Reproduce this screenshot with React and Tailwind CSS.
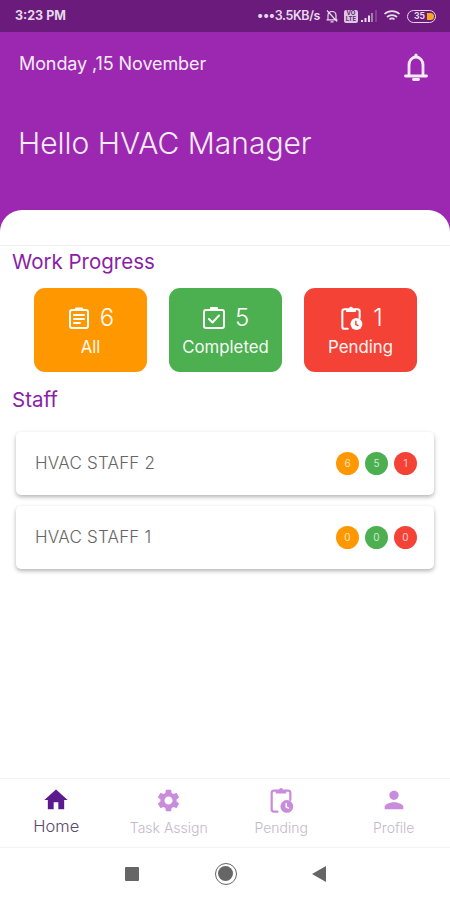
import { MdHome, MdSettings, MdPerson } from 'react-icons/md'

function ClipboardList({ size = 24 }) {
  return (
    <svg width={size} height={size} viewBox="0 0 24 24" fill="none" stroke="currentColor" strokeWidth="2" strokeLinejoin="round" strokeLinecap="round">
      <rect x="3" y="4" width="18" height="18" rx="2" />
      <path d="M9 4V2.5h6V4" />
      <path d="M7 9h10M7 13h10M7 17h6" />
    </svg>
  )
}

function ClipboardCheck({ size = 24 }) {
  return (
    <svg width={size} height={size} viewBox="0 0 24 24" fill="none" stroke="currentColor" strokeWidth="2" strokeLinejoin="round" strokeLinecap="round">
      <rect x="2" y="4" width="20" height="18" rx="2" />
      <path d="M9 4V2h6v2" />
      <path d="M7 13l3.5 3.5 6.5-7" />
    </svg>
  )
}

function ClipboardClock({ size = 24, className = '', mark = '#f44336' }) {
  return (
    <svg width={size} height={size} viewBox="0 0 24 24" fill="none" className={className}>
      <path d="M9 22H6a2 2 0 0 1-2-2V6a2 2 0 0 1 2-2h1.5M16.5 4H18a2 2 0 0 1 2 2v6" stroke="currentColor" strokeWidth="1.9" strokeLinecap="round" />
      <path d="M7.5 6.5V3h2.7a1.9 1.9 0 0 1 3.6 0h2.7v3.5z" fill="currentColor" />
      <circle cx="17" cy="17.5" r="5.5" fill="currentColor" />
      <path d="M16.5 15v3l2 1" stroke={mark} strokeWidth="1.3" strokeLinecap="round" />
    </svg>
  )
}

function HeaderBell() {
  return (
    <svg width="26" height="30" viewBox="0 0 26 30" fill="none" stroke="currentColor" strokeWidth="2.8" strokeLinecap="round">
      <path d="M6 23V13c0-4.5 3-8 7-8s7 3.500 7 8v10" />
      <path d="M2.500 24h21" />
      <circle cx="13" cy="3.200" r="1.600" fill="currentColor" stroke="none" />
      <path d="M10.500 27.500h5" />
    </svg>
  )
}

function StatCard({ color, icon, count, label }) {
  return (
    <div className={`w-[113px] h-[84px] rounded-[11px] ${color} flex flex-col items-center justify-center text-white pt-[2px]`}>
      <div className="flex items-center gap-[9px] h-[30px]">
        {icon}
        <span className="text-[24px] leading-none font-light">{count}</span>
      </div>
      <span className="text-[16.8px] leading-[24px] mt-[2px] opacity-95">{label}</span>
    </div>
  )
}

function Dot({ color, value }) {
  return (
    <div className={`w-[23px] h-[23px] rounded-full ${color} flex items-center justify-center text-white/75 text-[10px]`}>
      {value}
    </div>
  )
}

function StaffRow({ name, counts }) {
  return (
    <div className="h-[63px] mx-[16px] rounded-[5px] bg-white shadow-[0_2px_4px_rgba(0,0,0,0.3)] flex items-center justify-between pl-[19px] pr-[17px]">
      <span className="text-[17px] font-light text-[#666666] tracking-[0.2px]">{name}</span>
      <div className="flex gap-[6px]">
        <Dot color="bg-[#ff9800]" value={counts[0]} />
        <Dot color="bg-[#4caf50]" value={counts[1]} />
        <Dot color="bg-[#f44336]" value={counts[2]} />
      </div>
    </div>
  )
}

function NavItem({ icon, label, active }) {
  return (
    <div className="flex-1 flex flex-col items-center">
      <div className="h-[30px] flex items-center">{icon}</div>
      <span className={active ? 'text-[16.5px] font-light leading-[20px] text-[#5a4a6c] mt-[1px]' : 'text-[14px] font-light leading-[20px] text-[#c4b8ca] mt-[3px]'}>{label}</span>
    </div>
  )
}

export default function App() {
  return (
    <div className="w-[450px] h-[900px] bg-white flex flex-col overflow-hidden font-['Inter',sans-serif]">
      {/* Status bar */}
      <div className="h-[32px] bg-[#6a1b7c] flex items-center justify-between pl-[15px] pr-[14px] text-[#e6dbe9] shrink-0">
        <span className="text-[12.5px] font-bold">3:23 PM</span>
        <div className="flex items-center">
          <span className="text-[12.5px] font-semibold tracking-[-0.4px]">•••3.5KB/s</span>
          <svg width="14" height="14" viewBox="0 0 14 14" fill="none" stroke="currentColor" strokeWidth="1.2" className="ml-[5px]">
            <path d="M3 10.500V6.500C3 4 4.800 2.500 7 2.500S11 4 11 6.500v4M1.500 10.800h11M5.500 12.800h3M2 1.500l10 11" />
          </svg>
          <div className="ml-[5px] w-[14px] h-[13px] rounded-[2px] bg-[#d9c8de] text-[#6a1b7c] text-[6px] font-bold leading-[6px] flex flex-col items-center justify-center">
            <span>VO</span>
            <span>LTE</span>
          </div>
          <svg width="17" height="12" viewBox="0 0 17 12" className="ml-[2px]">
            <path d="M1 10h2v2H1zM4.500 8h2v4h-2zM8 5.500h2V12H8zM11.500 3h1v9h-1z" fill="currentColor" />
            <path d="M15.500 0h1v12h-1z" fill="#9a6aa8" />
          </svg>
          <svg width="19" height="14" viewBox="0 0 19 14" className="ml-[6px]" fill="none" stroke="currentColor" strokeWidth="1.7">
            <path d="M1.500 5a11 11 0 0 1 15 0M4 8a7.500 7.500 0 0 1 10 0M6.500 10.500a3.500 3.500 0 0 1 5 0" />
          </svg>
          <div className="ml-[5px] w-[29px] h-[13px] rounded-full border border-[#e6dbe9] flex items-center justify-center relative overflow-hidden">
            <span className="text-[8.500px] font-bold leading-none pr-[4px]">35</span>
            <div className="absolute right-[1px] top-[2px] w-[7px] h-[7px] rounded-r-full bg-[#f5a623]" />
          </div>
        </div>
      </div>

      {/* Header */}
      <div className="h-[200px] bg-[#9c27b0] flex flex-col text-[#f6ecf8] shrink-0">
        <div className="flex items-start justify-between pl-[19px] pr-[21px] pt-[20px]">
          <span className="text-[18px] leading-[24px] font-normal tracking-[-0.1px]">Monday ,15 November</span>
          <HeaderBell />
        </div>
        <div className="pl-[18px] mt-[41px] text-[30px] font-light leading-[40px]">Hello HVAC Manager</div>
        <div className="mt-auto h-[22px] bg-white rounded-t-[30px]" />
      </div>

      <div className="h-[14px] shrink-0 border-b border-[#efefef]" />

      <div className="pl-[12px] text-[20.500px] leading-[30px] text-[#8a1ea6] mt-[1px]">Work Progress</div>

      {/* Progress cards */}
      <div className="flex justify-between pl-[34px] pr-[33px] mt-[11px]">
        <StatCard color="bg-[#ff9800]" icon={<ClipboardList size={24} />} count="6" label="All" />
        <StatCard color="bg-[#4caf50]" icon={<ClipboardCheck size={24} />} count="5" label="Completed" />
        <StatCard color="bg-[#f44336]" icon={<ClipboardClock size={26} />} count="1" label="Pending" />
      </div>

      <div className="pl-[12px] text-[20.500px] leading-[30px] text-[#8a1ea6] mt-[13px]">Staff</div>

      {/* Staff list */}
      <div className="flex flex-col gap-[11px] mt-[17px]">
        <StaffRow name="HVAC STAFF 2" counts={[6, 5, 1]} />
        <StaffRow name="HVAC STAFF 1" counts={[0, 0, 0]} />
      </div>

      {/* Bottom nav */}
      <div className="mt-auto shrink-0">
        <div className="h-[70px] border-t border-b border-[#f3f3f3] flex pt-[6px]">
          <NavItem active label="Home" icon={<MdHome size={28} color="#5b1a8e" />} />
          <NavItem label="Task Assign" icon={<MdSettings size={27} color="#c98bdb" />} />
          <NavItem label="Pending" icon={<ClipboardClock size={28} className="text-[#c98bdb]" mark="#ffffff" />} />
          <NavItem label="Profile" icon={<MdPerson size={28} color="#c98bdb" />} />
        </div>
        <div className="h-[52px] flex justify-center items-center pb-[1px] gap-[75px] text-[#666666]">
          <div className="w-[14px] h-[14px] bg-[#666666] rounded-[1px] mr-[1px]" />
          <div className="w-[22px] h-[22px] rounded-full border-[1.500px] border-[#666666] flex items-center justify-center">
            <div className="w-[15px] h-[15px] rounded-full bg-[#666666]" />
          </div>
          <svg width="14" height="16" viewBox="0 0 14 16"><path d="M14 0v16L0 8z" fill="currentColor" /></svg>
        </div>
      </div>
    </div>
  )
}
